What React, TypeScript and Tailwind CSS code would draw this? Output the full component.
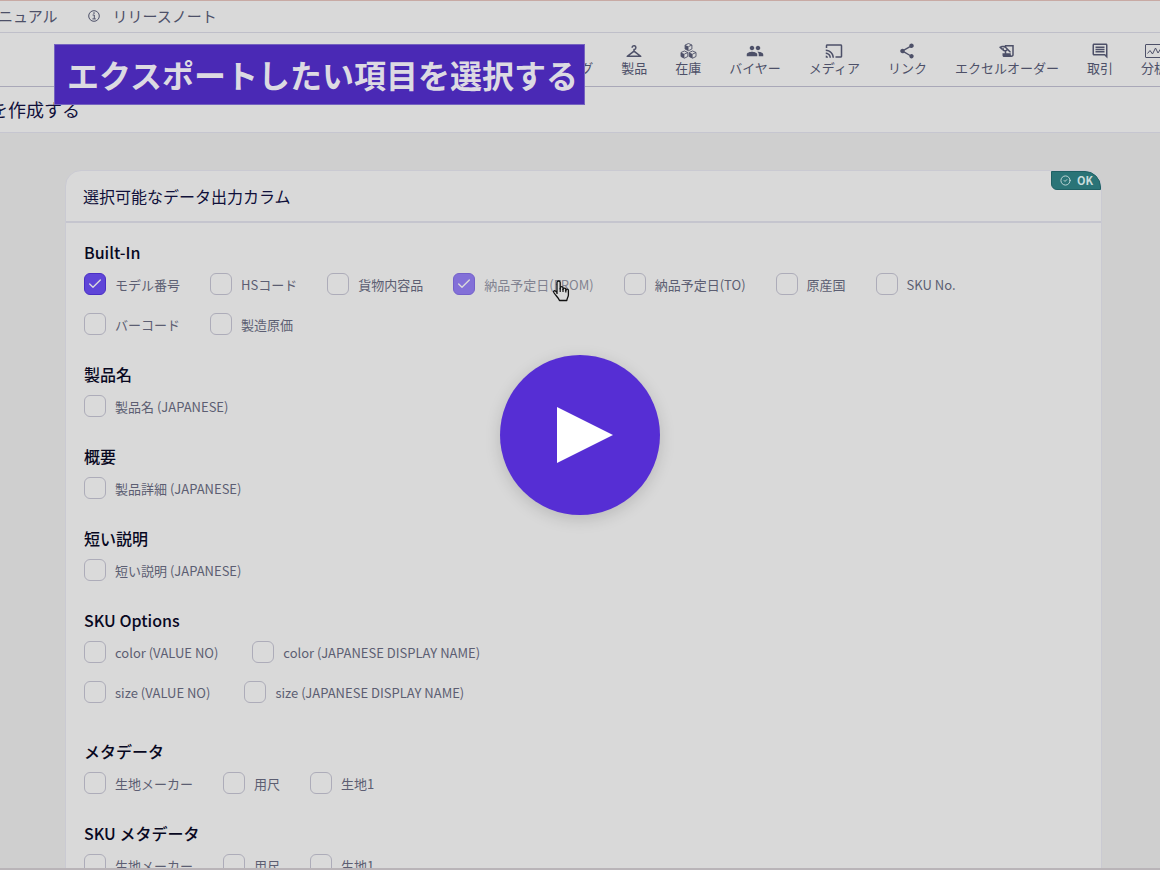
import React from "react";
import { Check, CircleCheck } from "lucide-react";
import {
  MdCheckroom,
  MdPeople,
  MdCast,
  MdShare,
  MdHistoryEdu,
  MdOutlineComment,
} from "react-icons/md";

type Option = { label: string; checked?: boolean; faded?: boolean };
type Section = { title: string; rows: Option[][]; wide?: boolean };

const sections: Section[] = [
  {
    title: "Built-In",
    rows: [
      [
        { label: "モデル番号", checked: true },
        { label: "HSコード" },
        { label: "貨物内容品" },
        { label: "納品予定日(FROM)", checked: true, faded: true },
        { label: "納品予定日(TO)" },
        { label: "原産国" },
        { label: "SKU No." },
        { label: "バーコード" },
        { label: "製造原価" },
      ],
    ],
  },
  { title: "製品名", rows: [[{ label: "製品名 (JAPANESE)" }]] },
  { title: "概要", rows: [[{ label: "製品詳細 (JAPANESE)" }]] },
  { title: "短い説明", rows: [[{ label: "短い説明 (JAPANESE)" }]] },
  {
    title: "SKU Options",
    wide: true,
    rows: [
      [{ label: "color (VALUE NO)" }, { label: "color (JAPANESE DISPLAY NAME)" }],
      [{ label: "size (VALUE NO)" }, { label: "size (JAPANESE DISPLAY NAME)" }],
    ],
  },
  {
    title: "メタデータ",
    rows: [[{ label: "生地メーカー" }, { label: "用尺" }, { label: "生地1" }]],
  },
  {
    title: "SKU メタデータ",
    rows: [[{ label: "生地メーカー" }, { label: "用尺" }, { label: "生地1" }]],
  },
];

const InfoIcon = () => (
  <svg viewBox="0 0 12 12" className="size-3" fill="none" stroke="currentColor">
    <circle cx="6" cy="6" r="5.3" strokeWidth="1" />
    <path d="M4.600 5H6.300V8.800M4.400 8.900h3.400" strokeWidth="1" />
    <circle cx="6" cy="3.100" r="0.8" fill="currentColor" stroke="none" />
  </svg>
);

const Cube = ({ x, y }: { x: number; y: number }) => (
  <g transform={`translate(${x} ${y})`}>
    <path d="M4 .5 7.400 2v4L4 7.700.6 6V2z" fill="none" stroke="currentColor" strokeWidth="0.9" />
    <path d="M.6 2 4 3.600v4.100L.6 6z" fill="currentColor" />
    <path d="M4 3.600 7.400 2" stroke="currentColor" strokeWidth="0.9" />
  </g>
);

const CubesIcon = () => (
  <svg viewBox="0 0 17 16" className="h-4 w-[17px]">
    <Cube x={4.5} y={0} />
    <Cube x={0.4} y={7.5} />
    <Cube x={8.6} y={7.5} />
  </svg>
);

const AnalyticsIcon = () => (
  <svg viewBox="0 0 18 16" className="h-4 w-[18px]" fill="none" stroke="currentColor" strokeWidth="1">
    <rect x="0.5" y="1.500" width="17" height="13" rx="0.5" />
    <path d="M2.500 10.500 5 7.500l2.500 3.500L10.500 5l2.500 5 2.500-4" />
  </svg>
);

const navItems = [
  { title: "グ", icon: null },
  { title: "製品", icon: <MdCheckroom className="size-[18px]" /> },
  { title: "在庫", icon: <CubesIcon /> },
  { title: "バイヤー", icon: <MdPeople className="size-[18px]" /> },
  { title: "メディア", icon: <MdCast className="size-[18px]" /> },
  { title: "リンク", icon: <MdShare className="size-[18px]" /> },
  { title: "エクセルオーダー", icon: <MdHistoryEdu className="size-[18px]" /> },
  { title: "取引", icon: <MdOutlineComment className="size-[18px]" /> },
  { title: "分析", icon: <AnalyticsIcon /> },
];

const OptionBox = ({ option, wide }: { option: Option; wide?: boolean }) => (
  <label
    className={`flex h-10 items-center gap-[9px] whitespace-nowrap text-[13px] text-[#5c5e72] ${
      wide ? "mr-[34px]" : "mr-[30px]"
    } ${option.faded ? "opacity-70" : ""}`}
  >
    <span className="relative flex size-[22px] shrink-0">
      <input
        type="checkbox"
        defaultChecked={option.checked}
        className="peer size-full appearance-none rounded-md border border-[#adacb9] bg-[#dadada] checked:border-[#4a2fc4] checked:bg-[#5f45d8]"
      />
      <Check
        strokeWidth={2}
        className="pointer-events-none absolute inset-0 m-auto hidden size-4 text-[#dcdcdc] peer-checked:block"
      />
    </span>
    <span className="pt-px">{option.label}</span>
  </label>
);

const HandCursor = () => (
  <svg viewBox="0 0 18 22" className="absolute left-[552px] top-[279px] h-[22px] w-[18px]">
    <path
      d="M5 14V2.600a1.600 1.600 0 0 1 3.200 0V9v-1a1.400 1.400 0 0 1 2.800 0v1.500a1.400 1.400 0 0 1 2.800 0v1a1.300 1.300 0 0 1 2.600 0V15c0 2-1.400 3-1.600 5.500H7.500C6.500 17.500 3.500 15.500 1.800 12.500c-.8-1.500 1-2.400 2-1.300L5 12.500"
      fill="#dadada"
      stroke="#111"
      strokeWidth="1.300"
      strokeLinejoin="round"
    />
    <path d="M8.200 8v4M11 9v3M13.800 10v2.500" stroke="#111" strokeWidth="1.200" />
  </svg>
);

const App = () => {
  return (
    <div className="relative flex h-screen flex-col overflow-hidden border-b-2 border-t border-b-[#b9b4b8] border-t-[#c8aaa4] bg-[#cfcfcf] font-['Noto_Sans_CJK_JP',sans-serif] text-[#4d5068]">
      {/* Top links */}
      <div className="flex h-8 shrink-0 items-center gap-[30px] border-b border-[#bfbfc9] bg-[#d9d9d9] pb-px text-[15px]">
        <a href="#manual" className="-ml-0.5">
          ニュアル
        </a>
        <a href="#release" className="flex items-center gap-[13px]">
          <InfoIcon />
          リリースノート
        </a>
      </div>

      {/* Main navigation */}
      <nav className="flex h-[54px] shrink-0 justify-end border-b border-[#a9a8b8] bg-[#d9d9d9]">
        <div className="-mr-[7px] flex gap-7 text-[13px]">
          {navItems.map((item) => (
            <a
              key={item.title}
              href="#nav"
              className="flex flex-col items-center whitespace-nowrap pt-[9px] leading-4"
            >
              <span className="flex h-[18px] items-center">{item.icon}</span>
              {item.title}
            </a>
          ))}
        </div>
      </nav>

      <div className="flex h-[46px] shrink-0 items-center border-b border-[#c6c6d0] bg-[#d9d9d9] pb-0.5">
        <h1 className="-ml-2.5 text-lg text-[#10103a]">を作成する</h1>
      </div>

      {/* Column picker */}
      <main className="min-h-0 flex-1 overflow-hidden px-[58px] pl-[65px] pt-[37px]">
        <section className="relative rounded-t-2xl border border-[#cacad2] bg-[#d9d9d9] pb-10">
          <h2 className="border-b-2 border-[#c5c5ce] px-[17px] py-[13px] text-base text-[#10103a]">
            選択可能なデータ出力カラム
          </h2>
          <span className="absolute right-0 top-0 flex h-[19px] items-center gap-1.5 rounded-bl-md rounded-tr-2xl border border-[#1f6064] bg-[#2a7477] pl-2 pr-[7px] text-[11px] font-bold text-[#c9dddd]">
            <CircleCheck className="size-[11px]" />
            OK
          </span>
          <div className="flex flex-col gap-[18px] pl-[18px] pt-[17px]">
            {sections.map((section) => (
              <fieldset key={section.title} className={section.wide ? "pb-[9px]" : ""}>
                <legend className="h-6 text-base leading-6 font-medium text-[#08081f]">
                  {section.title}
                </legend>
                {section.rows.map((row, i) => (
                  <div key={i} className="flex flex-wrap">
                    {row.map((option) => (
                      <OptionBox key={option.label} option={option} wide={section.wide} />
                    ))}
                  </div>
                ))}
              </fieldset>
            ))}
          </div>
        </section>
      </main>

      {/* Video overlay */}
      <p className="absolute left-[54px] top-[43px] border border-[#7563bf] bg-[#4a29b5] py-1.5 pl-3 pr-1.5 text-[32px] leading-[47px] font-bold whitespace-nowrap text-[#dcdae2]">
        エクスポートしたい項目を選択する
      </p>
      <HandCursor />
      <button
        type="button"
        aria-label="再生"
        className="absolute inset-0 m-auto flex size-40 items-center justify-center rounded-full bg-[#562ed4] shadow-[0_4px_16px_rgba(0,0,0,0.15)]"
      >
        <svg viewBox="0 0 56 56" className="ml-2.5 size-14 fill-white">
          <path d="M0 0 56 28 0 56z" />
        </svg>
      </button>
    </div>
  );
};

export default App;
